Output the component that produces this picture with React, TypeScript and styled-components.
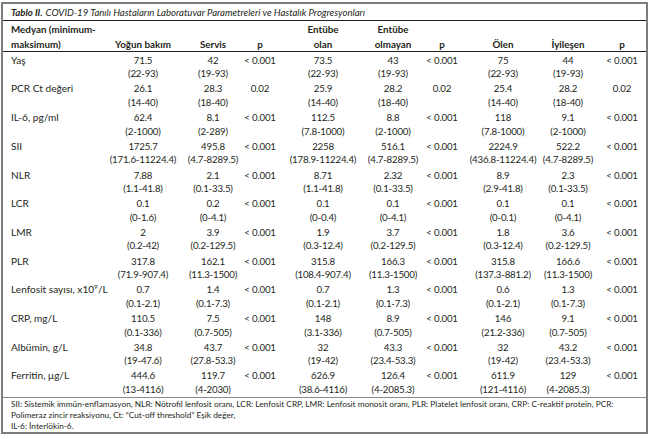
import { Fragment } from 'react';
import styled, { createGlobalStyle } from 'styled-components';

const GlobalStyle = createGlobalStyle`
  html, body {
    margin: 0;
    padding: 0;
    background: #ffffff;
  }
  body {
    font-family: Lato, "Open Sans", sans-serif;
    color: #231f20;
  }
`;

// widths chosen so each column's centre sits where the printed table has it
const COLS = '105px 70px 70px 24px 102px 38px 60px 62px 68px 40px';

const Page = styled.div`
  width: 651px;
  height: 439px;
  padding: 2px 3px 0 1px;
  box-sizing: border-box;
`;

const Frame = styled.div`
  border: 2px solid #7d7d7d;
  height: 432px;
  box-sizing: border-box;
  display: flex;
  flex-direction: column;
`;

const Title = styled.div`
  height: 17px;
  padding-left: 8px;
  display: flex;
  align-items: center;
  font-size: 9.6px;
  font-style: italic;
  border-bottom: 1.5px solid #231f20;
  white-space: nowrap;

  b {
    font-weight: 700;
    margin-right: 3px;
  }
`;

const Grid = styled.div`
  display: grid;
  grid-template-columns: ${COLS};
`;

const Header = styled(Grid)`
  height: 30.5px;
  box-sizing: border-box;
  padding-top: 1px;
  border-bottom: 1.5px solid #231f20;
  font-weight: 700;
  font-size: 9.8px;
  line-height: 14.5px;
`;

const HeadCell = styled.div<{ $left?: boolean }>`
  display: flex;
  flex-direction: column;
  justify-content: flex-end;
  align-items: ${({ $left }) => ($left ? 'flex-start' : 'center')};
  padding-left: ${({ $left }) => ($left ? '8px' : '0')};
  white-space: nowrap;
`;

const Body = styled.div`
  flex: 1;
  display: flex;
  flex-direction: column;
  padding-top: 1px;
`;

const Row = styled(Grid)`
  height: 28.7px;
  box-sizing: border-box;
  font-size: 10.1px;
  line-height: 13.6px;
  padding-top: 1px;
`;

const Cell = styled.div<{ $left?: boolean }>`
  display: flex;
  flex-direction: column;
  align-items: ${({ $left }) => ($left ? 'flex-start' : 'center')};
  padding-left: ${({ $left }) => ($left ? '8px' : '0')};
  font-size: ${({ $left }) => ($left ? '10.1px' : '9.7px')};
  letter-spacing: ${({ $left }) => ($left ? '0' : '-0.2px')};
  white-space: nowrap;

  sup {
    font-size: 6.5px;
    line-height: 0;
    vertical-align: 4px;
  }
`;

const Note = styled.div`
  border-top: 1.5px solid #8a8a8a;
  padding: 1px 8px 0;
  font-size: 8.3px;
  line-height: 11px;
`;

type Pair = [string, string];

interface RowData {
  label: React.ReactNode;
  groups: [Pair, Pair, string][];
}

const rows: RowData[] = [
  { label: 'Yaş', groups: [[['71.5', '(22-93)'], ['42', '(19-93)'], '< 0.001'], [['73.5', '(22-93)'], ['43', '(19-93)'], '< 0.001'], [['75', '(22-93)'], ['44', '(19-93)'], '< 0.001']] },
  { label: 'PCR Ct değeri', groups: [[['26.1', '(14-40)'], ['28.3', '(18-40)'], '0.02'], [['25.9', '(14-40)'], ['28.2', '(18-40)'], '0.02'], [['25.4', '(14-40)'], ['28.2', '(18-40)'], '0.02']] },
  { label: 'IL-6, pg/ml', groups: [[['62.4', '(2-1000)'], ['8.1', '(2-289)'], '< 0.001'], [['112.5', '(7.8-1000)'], ['8.8', '(2-1000)'], '< 0.001'], [['118', '(7.8-1000)'], ['9.1', '(2-1000)'], '< 0.001']] },
  { label: 'SII', groups: [[['1725.7', '(171.6-11224.4)'], ['495.8', '(4.7-8289.5)'], '< 0.001'], [['2258', '(178.9-11224.4)'], ['516.1', '(4.7-8289.5)'], '< 0.001'], [['2224.9', '(436.8-11224.4)'], ['522.2', '(4.7-8289.5)'], '< 0.001']] },
  { label: 'NLR', groups: [[['7.88', '(1.1-41.8)'], ['2.1', '(0.1-33.5)'], '< 0.001'], [['8.71', '(1.1-41.8)'], ['2.32', '(0.1-33.5)'], '< 0.001'], [['8.9', '(2.9-41.8)'], ['2.3', '(0.1-33.5)'], '< 0.001']] },
  { label: 'LCR', groups: [[['0.1', '(0-1.6)'], ['0.2', '(0-4.1)'], '< 0.001'], [['0.1', '(0-0.4)'], ['0.1', '(0-4.1)'], '< 0.001'], [['0.1', '(0-0.1)'], ['0.1', '(0-4.1)'], '< 0.001']] },
  { label: 'LMR', groups: [[['2', '(0.2-42)'], ['3.9', '(0.2-129.5)'], '< 0.001'], [['1.9', '(0.3-12.4)'], ['3.7', '(0.2-129.5)'], '< 0.001'], [['1.8', '(0.3-12.4)'], ['3.6', '(0.2-129.5)'], '< 0.001']] },
  { label: 'PLR', groups: [[['317.8', '(71.9-907.4)'], ['162.1', '(11.3-1500)'], '< 0.001'], [['315.8', '(108.4-907.4)'], ['166.3', '(11.3-1500)'], '< 0.001'], [['315.8', '(137.3-881.2)'], ['166.6', '(11.3-1500)'], '< 0.001']] },
  { label: <span>Lenfosit sayısı, x10<sup>9</sup>/L</span>, groups: [[['0.7', '(0.1-2.1)'], ['1.4', '(0.1-7.3)'], '< 0.001'], [['0.7', '(0.1-2.1)'], ['1.3', '(0.1-7.3)'], '< 0.001'], [['0.6', '(0.1-2.1)'], ['1.3', '(0.1-7.3)'], '< 0.001']] },
  { label: 'CRP, mg/L', groups: [[['110.5', '(0.1-336)'], ['7.5', '(0.7-505)'], '< 0.001'], [['148', '(3.1-336)'], ['8.9', '(0.7-505)'], '< 0.001'], [['146', '(21.2-336)'], ['9.1', '(0.7-505)'], '< 0.001']] },
  { label: 'Albümin, g/L', groups: [[['34.8', '(19-47.6)'], ['43.7', '(27.8-53.3)'], '< 0.001'], [['32', '(19-42)'], ['43.3', '(23.4-53.3)'], '< 0.001'], [['32', '(19-42)'], ['43.2', '(23.4-53.3)'], '< 0.001']] },
  { label: 'Ferritin, μg/L', groups: [[['444.6', '(13-4116)'], ['119.7', '(4-2030)'], '< 0.001'], [['626.9', '(38.6-4116)'], ['126.4', '(4-2085.3)'], '< 0.001'], [['611.9', '(121-4116)'], ['129', '(4-2085.3)'], '< 0.001']] },
];

const headers: [string, string][] = [
  ['', 'Yoğun bakım'],
  ['', 'Servis'],
  ['', 'p'],
  ['Entübe', 'olan'],
  ['Entübe', 'olmayan'],
  ['', 'p'],
  ['', 'Ölen'],
  ['', 'İyileşen'],
  ['', 'p'],
];

export default function App() {
  return (
    <>
      <GlobalStyle />
      <Page>
        <Frame>
          <Title>
            <b>Tablo II.</b> COVID-19 Tanılı Hastaların Laboratuvar Parametreleri ve Hastalık Progresyonları
          </Title>
          <Header>
            <HeadCell $left>
              <span>Medyan (minimum-</span>
              <span>maksimum)</span>
            </HeadCell>
            {headers.map(([top, bottom], i) => (
              <HeadCell key={i}>
                {top && <span>{top}</span>}
                <span>{bottom}</span>
              </HeadCell>
            ))}
          </Header>
          <Body>
            {rows.map((row, i) => (
              <Row key={i}>
                <Cell $left>{row.label}</Cell>
                {row.groups.map(([a, b, p], j) => (
                  <Fragment key={j}>
                    <Cell>
                      <span>{a[0]}</span>
                      <span>{a[1]}</span>
                    </Cell>
                    <Cell>
                      <span>{b[0]}</span>
                      <span>{b[1]}</span>
                    </Cell>
                    <Cell>{p}</Cell>
                  </Fragment>
                ))}
              </Row>
            ))}
          </Body>
          <Note>
            SII: Sistemik immün-enflamasyon, NLR: Nötrofil lenfosit oranı, LCR: Lenfosit CRP, LMR: Lenfosit monosit oranı, PLR: Platelet lenfosit oranı, CRP: C-reaktif protein, PCR:
            <br />
            Polimeraz zincir reaksiyonu, Ct: “Cut-off threshold” Eşik değer,
            <br />
            IL-6: İnterlökin-6.
          </Note>
        </Frame>
      </Page>
    </>
  );
}
